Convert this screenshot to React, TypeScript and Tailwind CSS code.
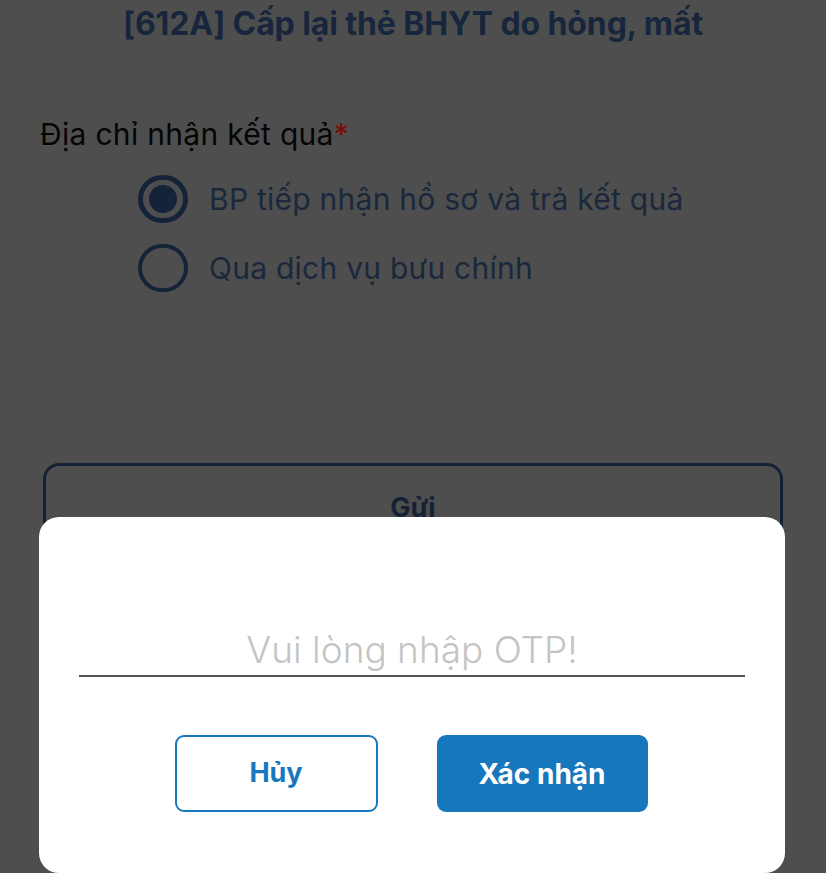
import React from "react";

export default function App() {
  return (
    <div className="relative w-full h-[873px] overflow-hidden bg-[#4e4e4e]" style={{ fontFamily: "Inter, Roboto, 'Noto Sans', sans-serif" }}>
      <div className="flex flex-col">
        <h1 className="pt-[4px] text-center text-[32px] leading-[40px] font-bold text-[#17263c] tracking-[-0.1px]">
          [612A] Cấp lại thẻ BHYT do hỏng, mất
        </h1>
        <div className="mt-[72px] pl-[40px] text-[30px] leading-[36px] text-[#050505] tracking-[0.3px]">
          Địa chỉ nhận kết quả<span className="text-[#7a0a0a]">*</span>
        </div>
        <div className="mt-[23px] pl-[138px] flex flex-col gap-[21px]">
          <div className="flex items-center gap-[21px]">
            <div className="w-[50px] h-[48px] rounded-full border-[5px] border-[#152338] flex items-center justify-center">
              <div className="w-[28px] h-[28px] rounded-full bg-[#152338]" />
            </div>
            <span className="text-[30px] leading-[36px] text-[#1a283c] tracking-[0.25px]">BP tiếp nhận hồ sơ và trả kết quả</span>
          </div>
          <div className="flex items-center gap-[21px]">
            <div className="w-[50px] h-[48px] rounded-full border-[4px] border-[#152338]" />
            <span className="text-[30px] leading-[36px] text-[#1a283c] tracking-[0.25px]">Qua dịch vụ bưu chính</span>
          </div>
        </div>
        <div className="mt-[171px] mx-[43px] h-[90px] rounded-[16px] border-[3px] border-[#152235] flex items-center justify-center">
          <span className="text-[27px] font-bold text-[#152235]">Gửi</span>
        </div>
      </div>

      <div className="absolute left-[39px] right-[41px] top-[517px] h-[356px] bg-white rounded-[20px] flex flex-col items-center">
        <div className="mt-[110px] w-[666px] border-b-2 border-[#555555] flex justify-center pb-[2px]">
          <span className="text-[37px] leading-[46px] font-light text-[#c4c4c4] tracking-[0px]">Vui lòng nhập OTP!</span>
        </div>
        <div className="mt-[58px] flex gap-[59px] ml-[-2px]">
          <button className="w-[203px] h-[77px] rounded-[9px] border-2 border-[#1877bd] bg-white text-[27px] font-bold text-[#1877bd]">
            Hủy
          </button>
          <button className="w-[211px] h-[77px] rounded-[9px] bg-[#1677bd] text-[28px] font-bold text-white">
            Xác nhận
          </button>
        </div>
      </div>
    </div>
  );
}
